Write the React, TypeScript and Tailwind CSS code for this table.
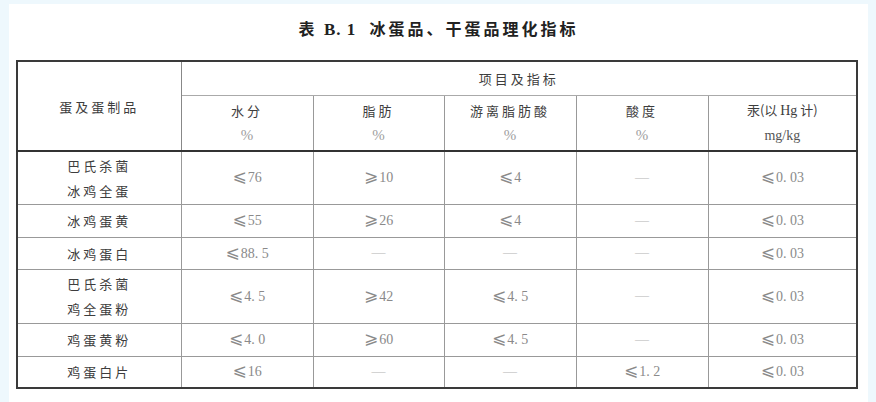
import React from 'react';

const cjk = '"Noto Sans CJK SC", "Noto Sans", sans-serif';
const num = '"Liberation Serif", "DejaVu Serif", "DejaVu Sans", "Noto Sans CJK SC", serif';

type Row = { name: string[]; vals: string[]; h: string };

const rows: Row[] = [
  { name: ['巴氏杀菌', '冰鸡全蛋'], vals: ['⩽76', '⩾10', '⩽4', '—', '⩽0. 03'], h: 'h-[53px]' },
  { name: ['冰鸡蛋黄'], vals: ['⩽55', '⩾26', '⩽4', '—', '⩽0. 03'], h: 'h-[33px]' },
  { name: ['冰鸡蛋白'], vals: ['⩽88. 5', '—', '—', '—', '⩽0. 03'], h: 'h-[32px]' },
  { name: ['巴氏杀菌', '鸡全蛋粉'], vals: ['⩽4. 5', '⩾42', '⩽4. 5', '—', '⩽0. 03'], h: 'h-[54px]' },
  { name: ['鸡蛋黄粉'], vals: ['⩽4. 0', '⩾60', '⩽4. 5', '—', '⩽0. 03'], h: 'h-[33px]' },
  { name: ['鸡蛋白片'], vals: ['⩽16', '—', '—', '⩽1. 2', '⩽0. 03'], h: 'h-[32px]' },
];

const heads = ['水分', '脂肪', '游离脂肪酸', '酸度'];

const Cjk = ({ children }: { children: React.ReactNode }) => (
  <span className="text-[13px] tracking-[3px] text-[#3d3d3d]" style={{ fontFamily: cjk }}>
    {children}
  </span>
);

// splits the relation sign off so it can be drawn a bit larger, like the print
const Value = ({ v }: { v: string }) => {
  if (v === '—') return <span className="text-[#b5b5b5]">—</span>;
  return (
    <span className="text-[#8a8a8a]">
      <span className="text-[17px] mr-[1px]">{v[0]}</span>
      {v.slice(1)}
    </span>
  );
};

export default function App() {
  return (
    <div className="w-full h-[402px] bg-[#eef8fd] pl-[9px] pr-[8px] pt-[4px] overflow-hidden">
      <div className="h-full bg-white px-[7px]">
        <div
          className="h-[56px] pt-[14px] leading-[20px] text-center text-[16px] font-bold tracking-[3px] text-[#222]"
          style={{ fontFamily: cjk }}
        >
          表 <span style={{ fontFamily: num }} className="text-[17px] tracking-[1px]">B. 1</span>&nbsp;&nbsp;冰蛋品、干蛋品理化指标
        </div>
        <table className="w-[840px] border-collapse border-2 border-[#3a3a3a] table-fixed">
          <colgroup>
            <col className="w-[164px]" />
            <col className="w-[132px]" />
            <col className="w-[131px]" />
            <col className="w-[132px]" />
            <col className="w-[132px]" />
            <col className="w-[149px]" />
          </colgroup>
          <thead>
            <tr className="h-[34px]">
              <th rowSpan={2} className="border-r border-[#888] border-b-2 border-b-[#333] font-normal p-0 text-center">
                <Cjk>蛋及蛋制品</Cjk>
              </th>
              <th colSpan={5} className="border-b border-[#aaa] font-normal p-0 text-center">
                <Cjk>项目及指标</Cjk>
              </th>
            </tr>
            <tr className="h-[56px]">
              {heads.map((h) => (
                <th key={h} className="border-r border-[#999] border-b-2 border-b-[#333] font-normal p-0 text-center leading-[25px]">
                  <div>
                    <Cjk>{h}</Cjk>
                  </div>
                  <div className="text-[15px] text-[#a0a0a0]" style={{ fontFamily: num }}>
                    %
                  </div>
                </th>
              ))}
              <th className="border-b-2 border-b-[#333] font-normal p-0 text-center leading-[25px]">
                <div className="text-[13px] text-[#3d3d3d]" style={{ fontFamily: cjk }}>
                  汞(以 <span style={{ fontFamily: num }} className="text-[14px]">Hg</span> 计)
                </div>
                <div className="text-[14px] text-[#555]" style={{ fontFamily: num }}>
                  mg/kg
                </div>
              </th>
            </tr>
          </thead>
          <tbody>
            {rows.map((r, i) => (
              <tr key={i} className={r.h}>
                <td className="border-r border-b border-[#999] p-0 text-center leading-[25px]">
                  {r.name.map((n) => (
                    <div key={n}>
                      <Cjk>{n}</Cjk>
                    </div>
                  ))}
                </td>
                {r.vals.map((v, j) => (
                  <td
                    key={j}
                    className={`border-b border-[#999] p-0 text-center text-[14px] leading-[20px] ${j < 4 ? 'border-r' : ''}`}
                    style={{ fontFamily: num }}
                  >
                    <Value v={v} />
                  </td>
                ))}
              </tr>
            ))}
          </tbody>
        </table>
      </div>
    </div>
  );
}
